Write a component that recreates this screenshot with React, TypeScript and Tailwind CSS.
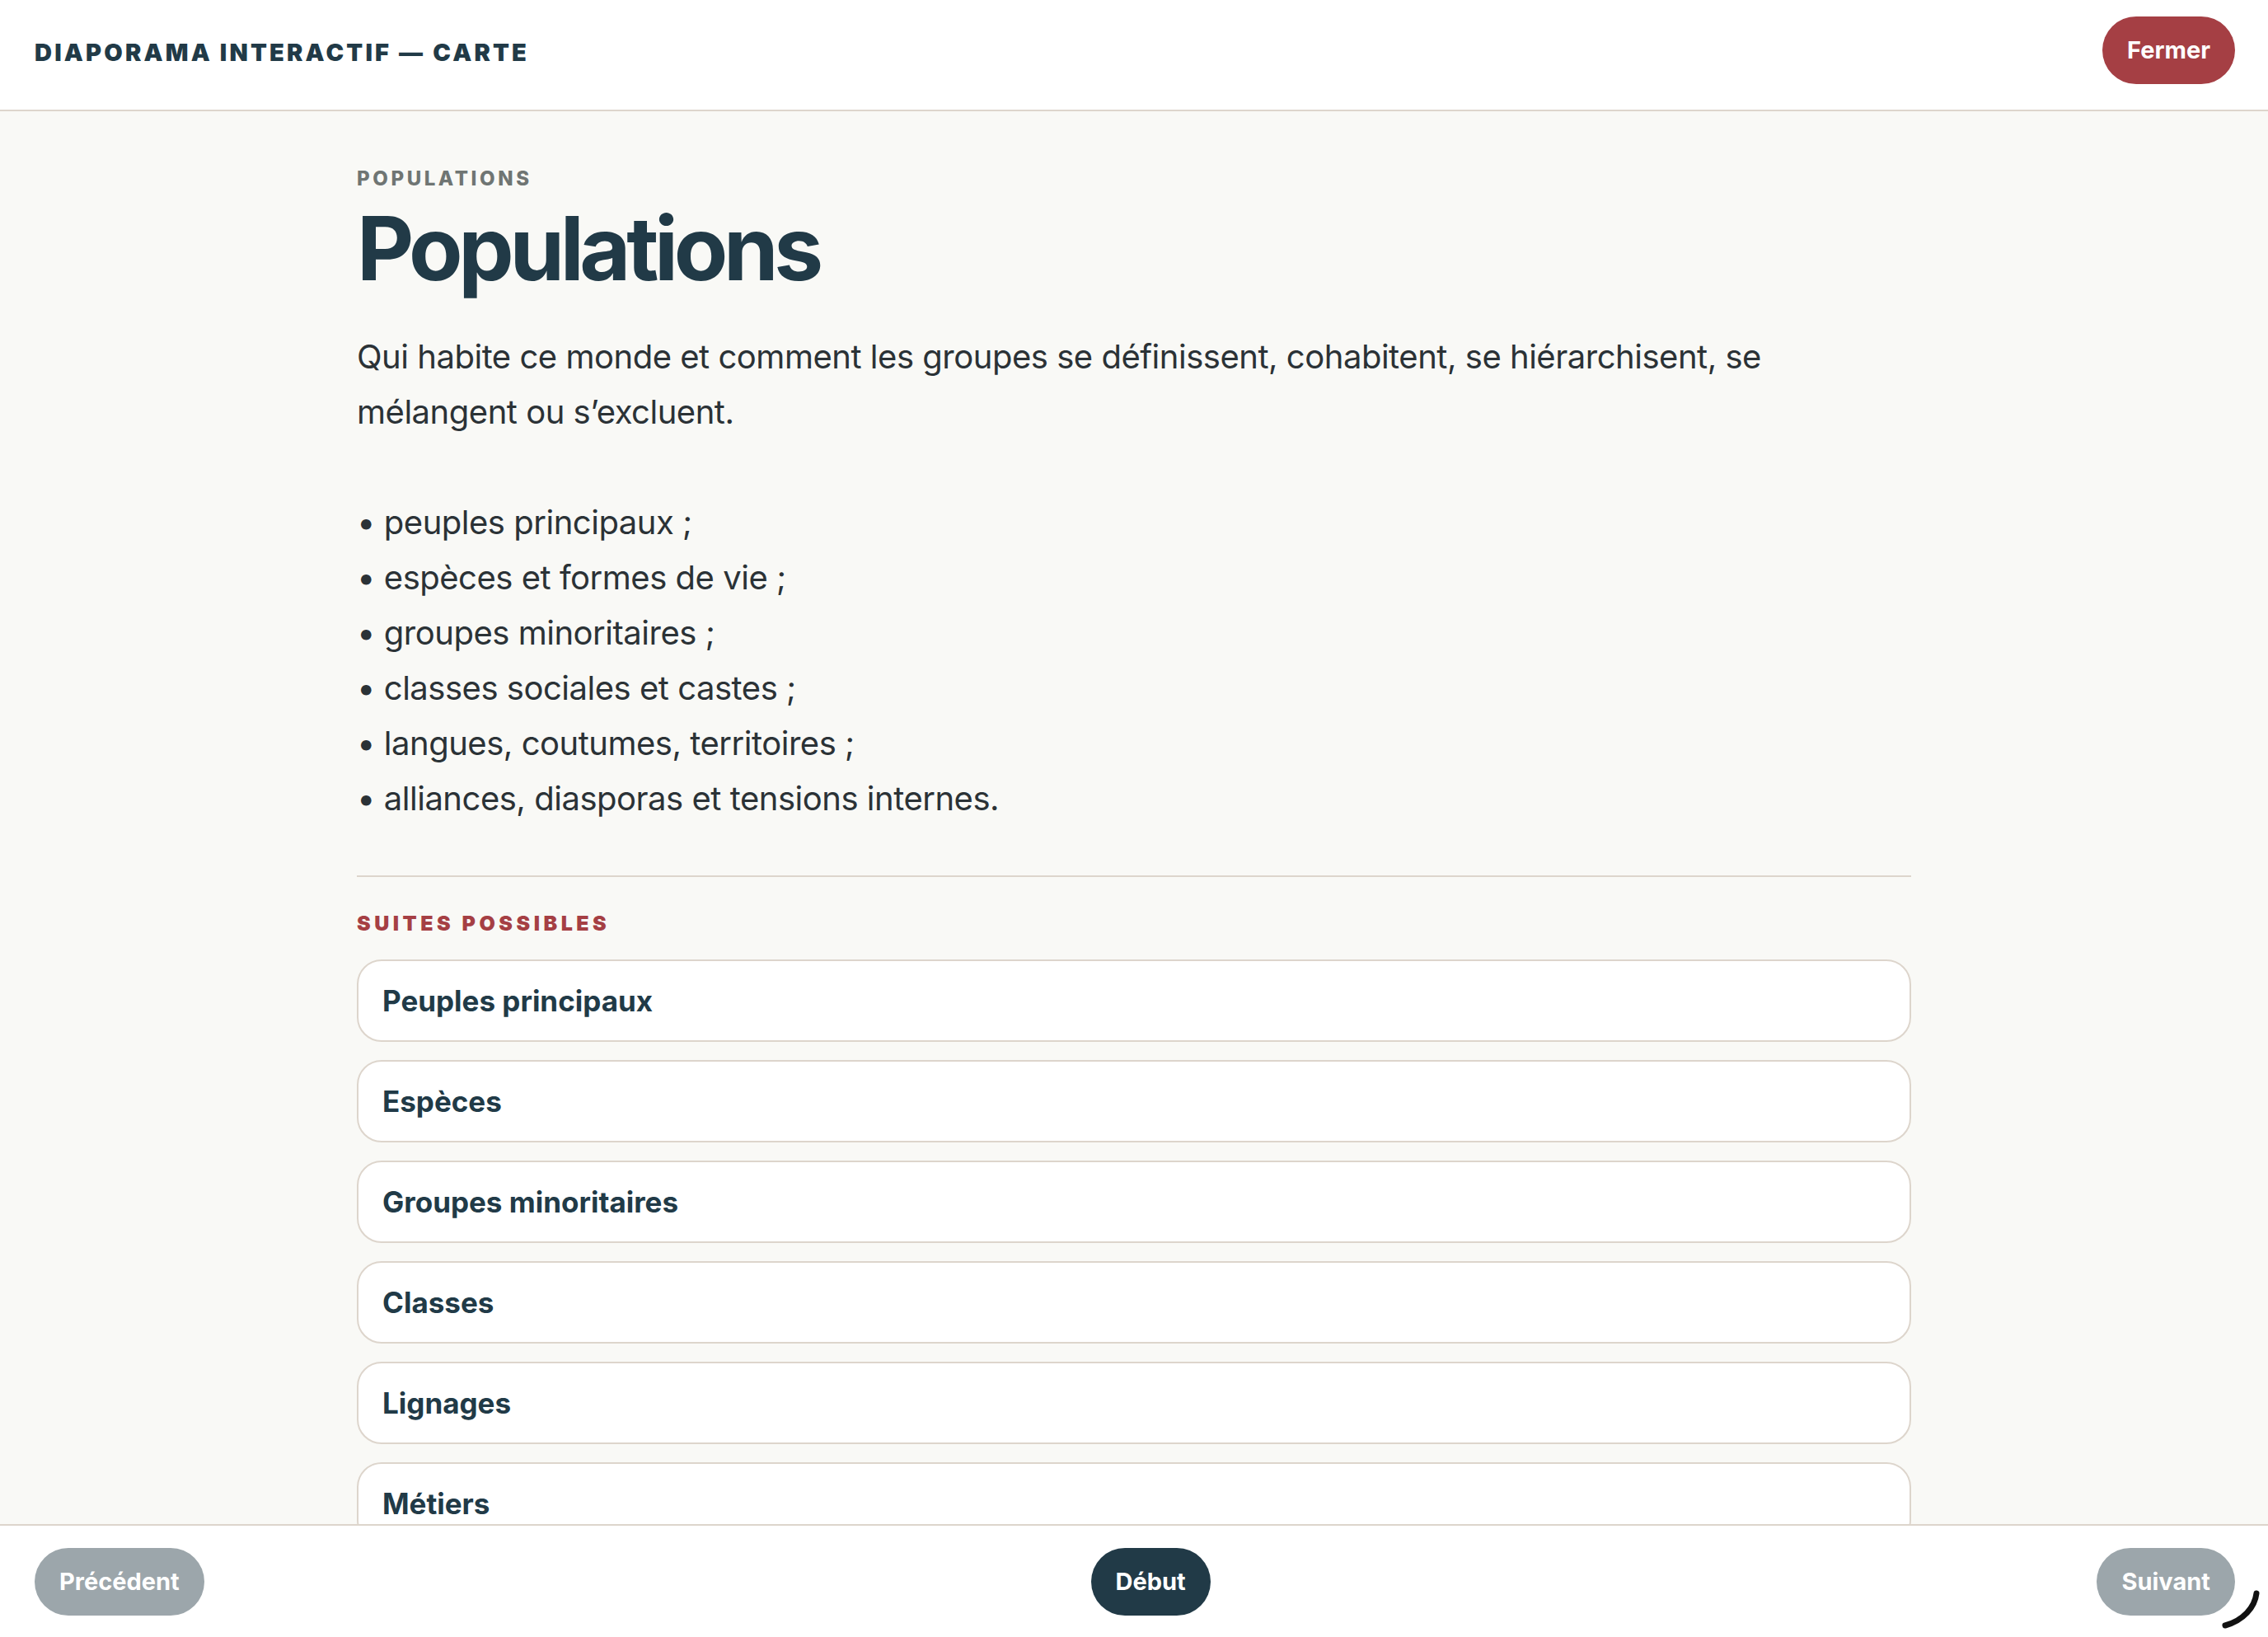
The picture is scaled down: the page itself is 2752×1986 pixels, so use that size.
import { useState } from 'react';

const suites = ['Peuples principaux', 'Espèces', 'Groupes minoritaires', 'Classes', 'Lignages', 'Métiers'];

const intro = `Qui habite ce monde et comment les groupes se définissent, cohabitent, se hiérarchisent, se mélangent ou s’excluent.

• peuples principaux ;
• espèces et formes de vie ;
• groupes minoritaires ;
• classes sociales et castes ;
• langues, coutumes, territoires ;
• alliances, diasporas et tensions internes.`;

function PillButton({ label, tone }: { label: string; tone: 'red' | 'dark' | 'muted' }) {
  const colors =
    tone === 'red' ? 'bg-[#a53f44]' : tone === 'dark' ? 'bg-[#213a47]' : 'bg-[#9ca6ab]';
  return (
    <button
      className={`${colors} h-[82px] rounded-full px-[30px] text-[29px] font-bold text-white`}
    >
      {label}
    </button>
  );
}

export default function App() {
  const [, setActive] = useState<string | null>(null);

  return (
    <div className="flex h-[1986px] flex-col bg-[#f9f9f6] font-['Inter',sans-serif] text-[#213a47]">
      <header className="flex h-[135px] shrink-0 items-center justify-between border-b-2 border-[#ddd5cc] bg-white pb-[12px] pl-[42px] pr-[40px]">
        <h2 className="pt-[6px] text-[29px] font-black uppercase tracking-[0.11em]">
          Diaporama interactif — Carte
        </h2>
        <PillButton label="Fermer" tone="red" />
      </header>

      <main className="min-h-0 flex-1 overflow-hidden">
        <div className="mx-auto w-[1886px] pt-[66px]">
          <div className="text-[24px] font-extrabold uppercase leading-[32px] tracking-[0.15em] text-[#6f7573]">
            Populations
          </div>
          <h1 className="mt-[4px] text-[107px] font-bold leading-[128px] tracking-[-0.05em]">
            Populations
          </h1>
          <p className="mt-[34px] whitespace-pre-line text-[40px] leading-[67px] tracking-[-0.012em] text-[#2b3236]">
            {intro}
          </p>

          <div className="mt-[60px] h-[2px] bg-[#ddd5cc]" />

          <div className="mt-[40px] text-[25px] font-black uppercase leading-[32px] tracking-[0.18em] text-[#a53f44]">
            Suites possibles
          </div>
          <ul className="mt-[28px] flex flex-col gap-[22px]">
            {suites.map((s) => (
              <li key={s}>
                <button
                  onClick={() => setActive(s)}
                  className="flex h-[100px] w-full items-center rounded-[30px] border-2 border-[#ddd5cc] bg-white px-[29px] text-left text-[35px] font-bold"
                >
                  {s}
                </button>
              </li>
            ))}
          </ul>
        </div>
      </main>

      <footer className="relative flex h-[137px] shrink-0 items-center justify-between border-t-2 border-[#ddd5cc] bg-white pl-[42px] pr-[40px]">
        <PillButton label="Précédent" tone="muted" />
        <PillButton label="Début" tone="dark" />
        <PillButton label="Suivant" tone="muted" />
        {/* busy cursor arc */}
        <svg
          className="absolute bottom-[8px] right-[8px]"
          width="50"
          height="50"
          viewBox="0 0 50 50"
          fill="none"
        >
          <path d="M44 5 C42 22 28 38 6 44" stroke="#111" strokeWidth="7" strokeLinecap="round" />
        </svg>
      </footer>
    </div>
  );
}
